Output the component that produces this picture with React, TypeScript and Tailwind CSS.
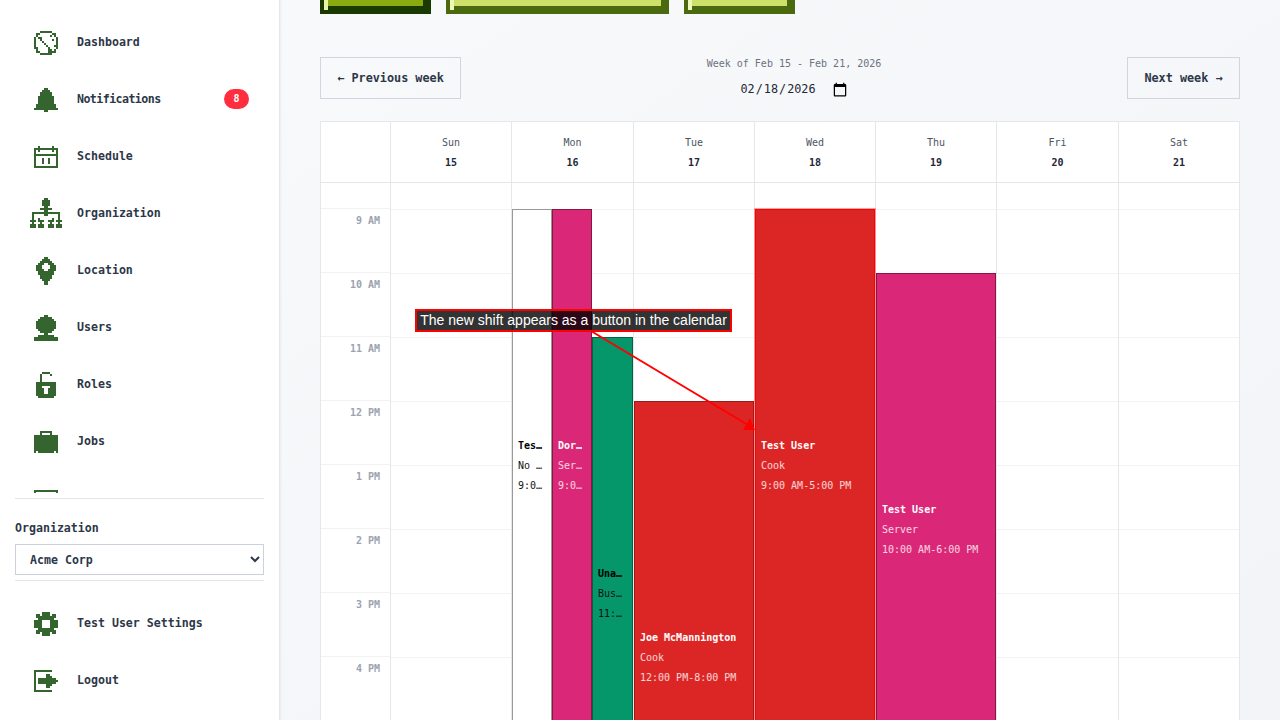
import React from "react";

const mono = "font-['DejaVu_Sans_Mono','Liberation_Mono',monospace]";

function Pix({ rows, s = 2 }: { rows: string[]; s?: number }) {
  const w = rows[0].length;
  const rects: React.ReactNode[] = [];
  rows.forEach((r, y) => {
    let x = 0;
    while (x < r.length) {
      if (r[x] === "#") {
        let e = x;
        while (e < r.length && r[e] === "#") e++;
        rects.push(<rect key={`${y}-${x}`} x={x * s} y={y * s} width={(e - x) * s} height={s} />);
        x = e;
      } else x++;
    }
  });
  return (
    <svg width={w * s} height={rows.length * s} viewBox={`0 0 ${w * s} ${rows.length * s}`} fill="#35652f" shapeRendering="crispEdges">
      {rects}
    </svg>
  );
}

const icons: Record<string, string[]> = {
  dashboard: ["...######...", ".##......##.", ".#......#.#.", "#.##.......#", "#..#.....#.#", "#...#......#", "#....#.....#", "#.....#...##", "##.....#...#", ".#.....##.#.", ".##....####.", "...######..."],
  bell: [".....##.....", "....####....", "...######...", "...######...", "..########..", "..########..", "..########..", "..########..", ".##########.", ".##########.", "############", ".....##....."],
  calendar: ["..#......#..", "############", "#.#......#.#", "#..........#", "############", "#..........#", "#...#..#...#", "#...#..#...#", "#...#..#...#", "#..........#", "############"],
  org: [".......##.......", "......####......", "......####......", "......####......", ".......##.......", ".....######.....", ".......##.......", ".##############.", ".#.....##.....#.", ".#............#.", ".#..#......#..#.", "###.###..###.###", ".#...#....#...#.", "###.###..###.###", "###.###..###.###", "................"],
  location: ["....##....", "...####...", "..######..", ".###..###.", "###....###", "###....###", "####..####", ".########.", ".########.", "..######..", "..######..", "...####...", "....##....", "....##...."],
  users: [".....##.....", "...######...", "..########..", ".##########.", ".##########.", ".##########.", ".##########.", "..########..", "...######...", ".....##.....", "..########..", "############", "############"],
  roles: ["...####...", "..#....#..", "..#.......", "..#.......", "..#.......", "##########", "##########", "###....###", "####..####", "####..####", "####..####", "##########", ".########."],
  jobs: ["...######...", "...#....#...", "############", "############", "############", "############", "############", "############", "############", "############", "#.########.#"],
  next: ["############", "#..........#", "#..........#"],
  gear: ["....####....", ".##.####.##.", ".##########.", "..########..", "####....####", "####....####", "####....####", "####....####", "..########..", ".##########.", ".##.####.##.", "....####...."],
  logout: ["#########...", "#...........", "#.....##....", "#.....###...", "#.#########.", "#.##########", "#.#########.", "#.....###...", "#.....##....", "#...........", "#########..."],
};

function NavItem({ icon, label, badge, tight }: { icon: string; label: string; badge?: string; tight?: boolean }) {
  return (
    <div className="h-[57px] shrink-0 flex items-center pl-[30px] pr-[30px] gap-[15px] text-[11.6px] font-semibold text-[#2d3748]">
      <div className="w-[32px] flex justify-center shrink-0">
        <Pix rows={icons[icon]} />
      </div>
      <span className={`flex-1 pt-px ${tight ? "tracking-[-0.55px]" : ""}`}>{label}</span>
      {badge && (
        <span className="w-[25px] h-[20px] mb-[2px] rounded-full bg-[#ff2d3d] text-white text-[10px] font-bold flex items-center justify-center">{badge}</span>
      )}
    </div>
  );
}

function TopBar({ w, dark, fill, hi }: { w: string; dark: string; fill: string; hi: string }) {
  return (
    <div className={`${w} h-[14px] ${dark} pl-1 pr-2 shrink-0 relative`}>
      <div className={`h-[6px] ${fill}`} />
      <div className={`absolute left-1 top-0 w-1 h-[10px] ${hi}`} />
    </div>
  );
}

type Ev = {
  top: number;
  cls: string;
  box: string;
  name: string;
  role: string;
  time: string;
  dark?: boolean;
};

function Event({ e }: { e: Ev }) {
  return (
    <div className={`absolute h-[512px] flex flex-col justify-center pt-[2px] pl-[5px] pr-[5px] ${e.box} ${e.cls}`} style={{ top: e.top }}>
      <div className={`h-[20px] leading-[20px] font-bold truncate ${e.dark ? "text-black" : "text-white"}`}>{e.name}</div>
      <div className={`h-[20px] leading-[20px] truncate ${e.dark ? "text-[#111]" : "text-white/80"}`}>{e.role}</div>
      <div className={`h-[20px] leading-[20px] truncate ${e.dark ? "text-[#111]" : "text-white/80"}`}>{e.time}</div>
    </div>
  );
}

const days = [
  { d: "Sun", n: "15" },
  { d: "Mon", n: "16" },
  { d: "Tue", n: "17" },
  { d: "Wed", n: "18" },
  { d: "Thu", n: "19" },
  { d: "Fri", n: "20" },
  { d: "Sat", n: "21" },
];

const hours = ["9 AM", "10 AM", "11 AM", "12 PM", "1 PM", "2 PM", "3 PM", "4 PM"];

const events: Record<string, Ev[]> = {
  Mon: [
    { top: 26, box: "left-0 w-[40px]", cls: "bg-white border border-[#999999]", name: "Test User", role: "No Job", time: "9:00 AM-5:00 PM", dark: true },
    { top: 26, box: "left-[40px] w-[40px]", cls: "bg-[#db2777] border border-[#831843]", name: "Doris Day", role: "Server", time: "9:00 AM-5:00 PM" },
    { top: 154, box: "left-[80px] w-[41px]", cls: "bg-[#059669] border border-[#065f46]", name: "Unassigned", role: "Busser", time: "11:00 AM-7:00 PM", dark: true },
  ],
  Tue: [{ top: 218, box: "left-0 right-0", cls: "bg-[#dc2626] border border-[#991b1b]", name: "Joe McMannington", role: "Cook", time: "12:00 PM-8:00 PM" }],
  Wed: [{ top: 26, box: "left-0 right-0", cls: "bg-[#dc2626] border border-[#ff0000] shadow-[0_0_0_1px_rgba(255,0,0,0.35)]", name: "Test User", role: "Cook", time: "9:00 AM-5:00 PM" }],
  Thu: [{ top: 90, box: "left-0 right-0", cls: "bg-[#db2777] border border-[#831843]", name: "Test User", role: "Server", time: "10:00 AM-6:00 PM" }],
};

const cols = "grid grid-cols-[70px_121px_122px_121px_121px_121px_122px_120px]";

export default function App() {
  return (
    <div className={`relative h-screen w-full overflow-hidden flex ${mono}`}>
      <aside className="relative z-10 w-[280px] h-full shrink-0 bg-white border-r border-[#e5e7eb] shadow-[1px_0_2px_rgba(0,0,0,0.05)] flex flex-col">
        <nav className="flex-1 min-h-0 overflow-hidden pt-[14px] flex flex-col">
          <NavItem icon="dashboard" label="Dashboard" />
          <NavItem icon="bell" label="Notifications" badge="8" tight />
          <NavItem icon="calendar" label="Schedule" />
          <NavItem icon="org" label="Organization" />
          <NavItem icon="location" label="Location" />
          <NavItem icon="users" label="Users" />
          <NavItem icon="roles" label="Roles" />
          <NavItem icon="jobs" label="Jobs" />
          <div className="pl-[34px] pt-[20px]">
            <Pix rows={icons.next} />
          </div>
        </nav>
        <div className="shrink-0 mt-[5px] flex flex-col">
          <div className="mx-[15px] border-t border-[#e2e5e9] pt-[21px] h-[46px]">
            <div className="h-[16px] leading-[16px] text-[11.6px] font-semibold text-[#2d3748]">Organization</div>
          </div>
          <div className="mx-[15px]">
            <select className="w-full h-[31px] bg-white border border-[#cbd2dc] pl-[10px] pt-px text-[11.6px] font-semibold text-[#2d3748]" defaultValue="acme">
              <option value="acme">Acme Corp</option>
            </select>
          </div>
          <div className="mx-[15px] mt-[5px] border-t border-[#e2e5e9]" />
          <div className="pt-[14px] pb-[11px]">
            <NavItem icon="gear" label="Test User Settings" />
            <NavItem icon="logout" label="Logout" />
          </div>
        </div>
      </aside>

      <main className="flex-1 min-w-0 h-full overflow-hidden bg-linear-to-br from-[#f8f9fb] to-[#f3f4f7] px-[40px]">
        <div className="flex gap-[15px]">
          <TopBar w="w-[111px]" dark="bg-[#1b3a02]" fill="bg-[#8aab10]" hi="bg-[#e6f5a8]" />
          <TopBar w="w-[223px]" dark="bg-[#4b6a10]" fill="bg-[#cce06a]" hi="bg-[#eef8b8]" />
          <TopBar w="w-[111px]" dark="bg-[#4b6a10]" fill="bg-[#cce06a]" hi="bg-[#eef8b8]" />
        </div>

        <div className="mt-[43px] flex items-start justify-between h-[42px]">
          <button className="w-[141px] h-[42px] pt-[2px] border border-[#d1d5e0] text-[11.8px] font-semibold text-[#2d3748] flex items-center justify-center">
            ← Previous week
          </button>
          <div className="flex flex-col items-center">
            <div className="text-[10px] leading-[14px] font-medium text-[#6b7280]">Week of Feb 15 - Feb 21, 2026</div>
            <input
              type="date"
              defaultValue="2026-02-18"
              className="mt-[8px] h-[22px] w-[109px] pl-0 pr-0 text-[11.8px] font-medium text-[#1f2937] bg-transparent [&::-webkit-calendar-picker-indicator]:w-[16px] [&::-webkit-calendar-picker-indicator]:h-[16px] [&::-webkit-calendar-picker-indicator]:p-0 [&::-webkit-calendar-picker-indicator]:m-0"
            />
          </div>
          <button className="w-[113px] h-[42px] pt-[2px] border border-[#d1d5e0] text-[11.8px] font-semibold text-[#2d3748] flex items-center justify-center">
            Next week →
          </button>
        </div>

        <div className="mt-[22px] bg-white border border-[#e5e7eb] border-b-0">
          <div className={`${cols} h-[61px] border-b border-[#e5e7eb]`}>
            <div className="border-r border-[#e5e7eb]" />
            {days.map((x) => (
              <div key={x.d} className="border-r border-[#e5e7eb] last:border-r-0 flex flex-col items-center pt-[11px] text-[10px] leading-[20px]">
                <span className="font-medium text-[#4b5563]">{x.d}</span>
                <span className="font-bold text-[#1f2937]">{x.n}</span>
              </div>
            ))}
          </div>
          <div className={cols}>
            <div className="border-r border-[#e5e7eb]">
              <div className="h-[26px] border-b border-[#f1f2f4]" />
              {hours.map((h) => (
                <div key={h} className="h-[64px] border-b border-[#f1f2f4] text-right pr-[10px] pt-[5px] text-[10px] leading-[14px] font-bold text-[#9ca3af]">
                  {h}
                </div>
              ))}
            </div>
            {days.map((x) => (
              <div key={x.d} className="relative border-r border-[#e5e7eb] last:border-r-0">
                <div className="h-[27px] border-b border-[#f1f2f4]" />
                {hours.map((h) => (
                  <div key={h} className="h-[64px] border-b border-[#f1f2f4]" />
                ))}
                {(events[x.d] || []).map((e, i) => (
                  <div key={i} className="text-[10px]">
                    <Event e={e} />
                  </div>
                ))}
              </div>
            ))}
          </div>
        </div>
      </main>

      <svg className="absolute z-20 left-0 top-0 pointer-events-none" width={1280} height={720} viewBox="0 0 1280 720">
        <line x1={591} y1={331} x2={748} y2={425} stroke="#ff0000" strokeWidth={2} />
        <polygon points="755,430 743,430 750,418" fill="#ff0000" />
      </svg>
      <div className="absolute z-20 left-[415px] top-[309px] w-[317px] h-[23px] border-2 border-[#ff0000] bg-black/80 text-white text-[14px] leading-[19px] text-center font-['Liberation_Sans',Arial,sans-serif] whitespace-nowrap">
        The new shift appears as a button in the calendar
      </div>
    </div>
  );
}
